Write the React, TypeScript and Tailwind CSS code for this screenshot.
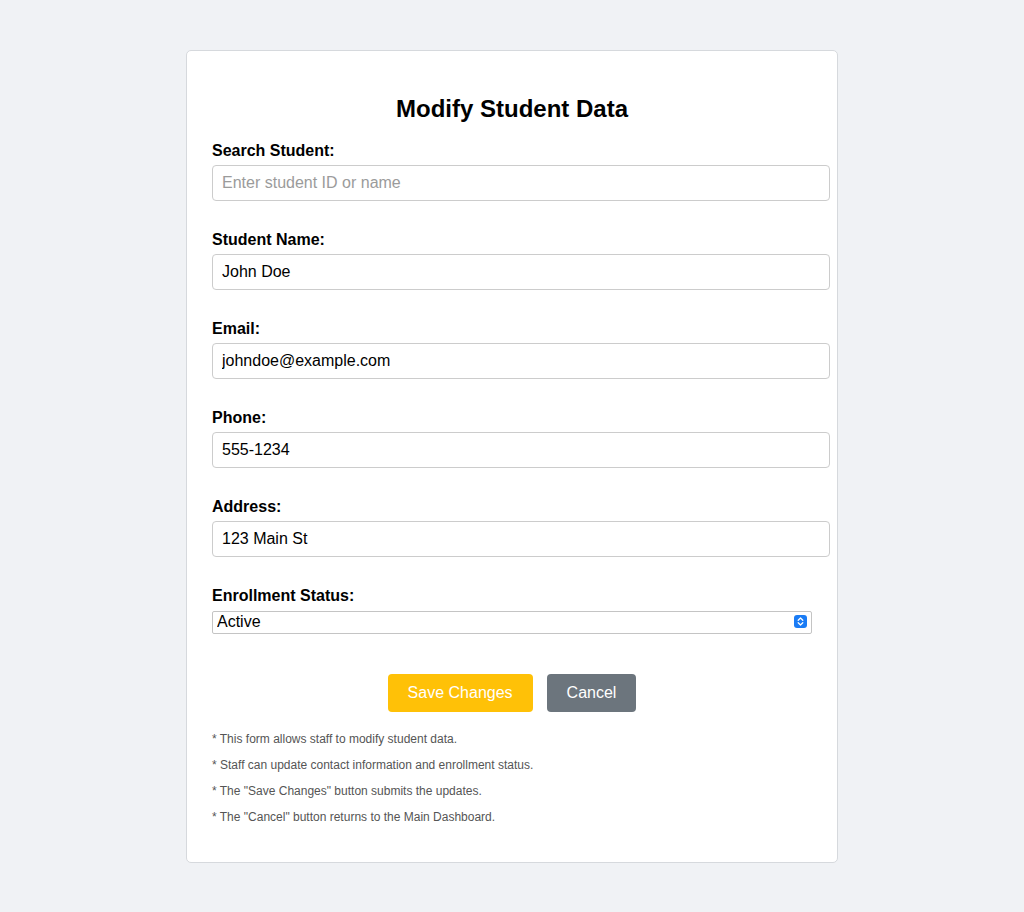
import { useState } from 'react';

const font = { fontFamily: '"Liberation Sans", Arial, sans-serif' };

function Field({ label, value, placeholder }: { label: string; value?: string; placeholder?: string }) {
  const [v, setV] = useState(value ?? '');
  return (
    <div className="mb-[30px]">
      <label className="block text-[16px] leading-[18px] font-bold text-black mb-[5px]">{label}</label>
      <input
        type="text"
        value={v}
        placeholder={placeholder}
        onChange={(e) => setV(e.target.value)}
        className="block w-[618px] h-[36px] pl-[9px] pr-[10px] text-[16px] text-black border border-[#ccc] rounded-[4px] bg-white placeholder:text-[#9b9b9b] outline-none"
      />
    </div>
  );
}

export default function App() {
  return (
    <div className="min-h-[912px] bg-[#f0f2f5] pt-[50px]" style={font}>
      <div className="mx-auto w-[652px] bg-white border border-[#d6d9dd] rounded-[5px] px-[25px] pt-[25px] pb-[38px]">
        <h2 className="text-[24px] leading-[27.6px] font-bold text-black text-center mt-[19px] mb-[19px]">Modify Student Data</h2>

        <Field label="Search Student:" placeholder="Enter student ID or name" />
        <Field label="Student Name:" value="John Doe" />
        <Field label="Email:" value="johndoe@example.com" />
        <Field label="Phone:" value="555-1234" />
        <Field label="Address:" value="123 Main St" />

        <div className="mb-[40px]">
          <label className="block text-[16px] leading-[18px] font-bold text-black mb-[6px]">Enrollment Status:</label>
          <div className="relative w-[600px]">
            <select
              defaultValue="Active"
              className="block w-full h-[23px] pl-[4px] text-[16px] leading-[20px] text-black bg-white border border-[#c4c4c4] rounded-[2px] appearance-none outline-none"
            >
              <option>Active</option>
              <option>Inactive</option>
              <option>Graduated</option>
              <option>Suspended</option>
            </select>
            <span className="pointer-events-none absolute right-[5px] top-[4px] w-[13px] h-[13px] rounded-[3px] bg-[#1a7cf5] flex items-center justify-center">
              <svg width="7" height="9" viewBox="0 0 7 9" fill="none" stroke="white" strokeWidth="1.3" strokeLinecap="round" strokeLinejoin="round">
                <path d="M1.2 3.2 L3.5 1 L5.8 3.2" />
                <path d="M1.2 5.8 L3.5 8 L5.8 5.8" />
              </svg>
            </span>
          </div>
        </div>

        <div className="flex justify-center gap-[14px]">
          <button className="h-[38px] px-[20px] rounded-[4px] bg-[#ffc107] text-white text-[16px]">Save Changes</button>
          <button className="h-[38px] px-[20px] rounded-[4px] bg-[#6c757d] text-white text-[16px]">Cancel</button>
        </div>

        <div className="mt-[20px] text-[12px] leading-[14px] text-[#555]">
          <p className="mb-[12px]">* This form allows staff to modify student data.</p>
          <p className="mb-[12px]">* Staff can update contact information and enrollment status.</p>
          <p className="mb-[12px]">* The "Save Changes" button submits the updates.</p>
          <p>* The "Cancel" button returns to the Main Dashboard.</p>
        </div>
      </div>
    </div>
  );
}
